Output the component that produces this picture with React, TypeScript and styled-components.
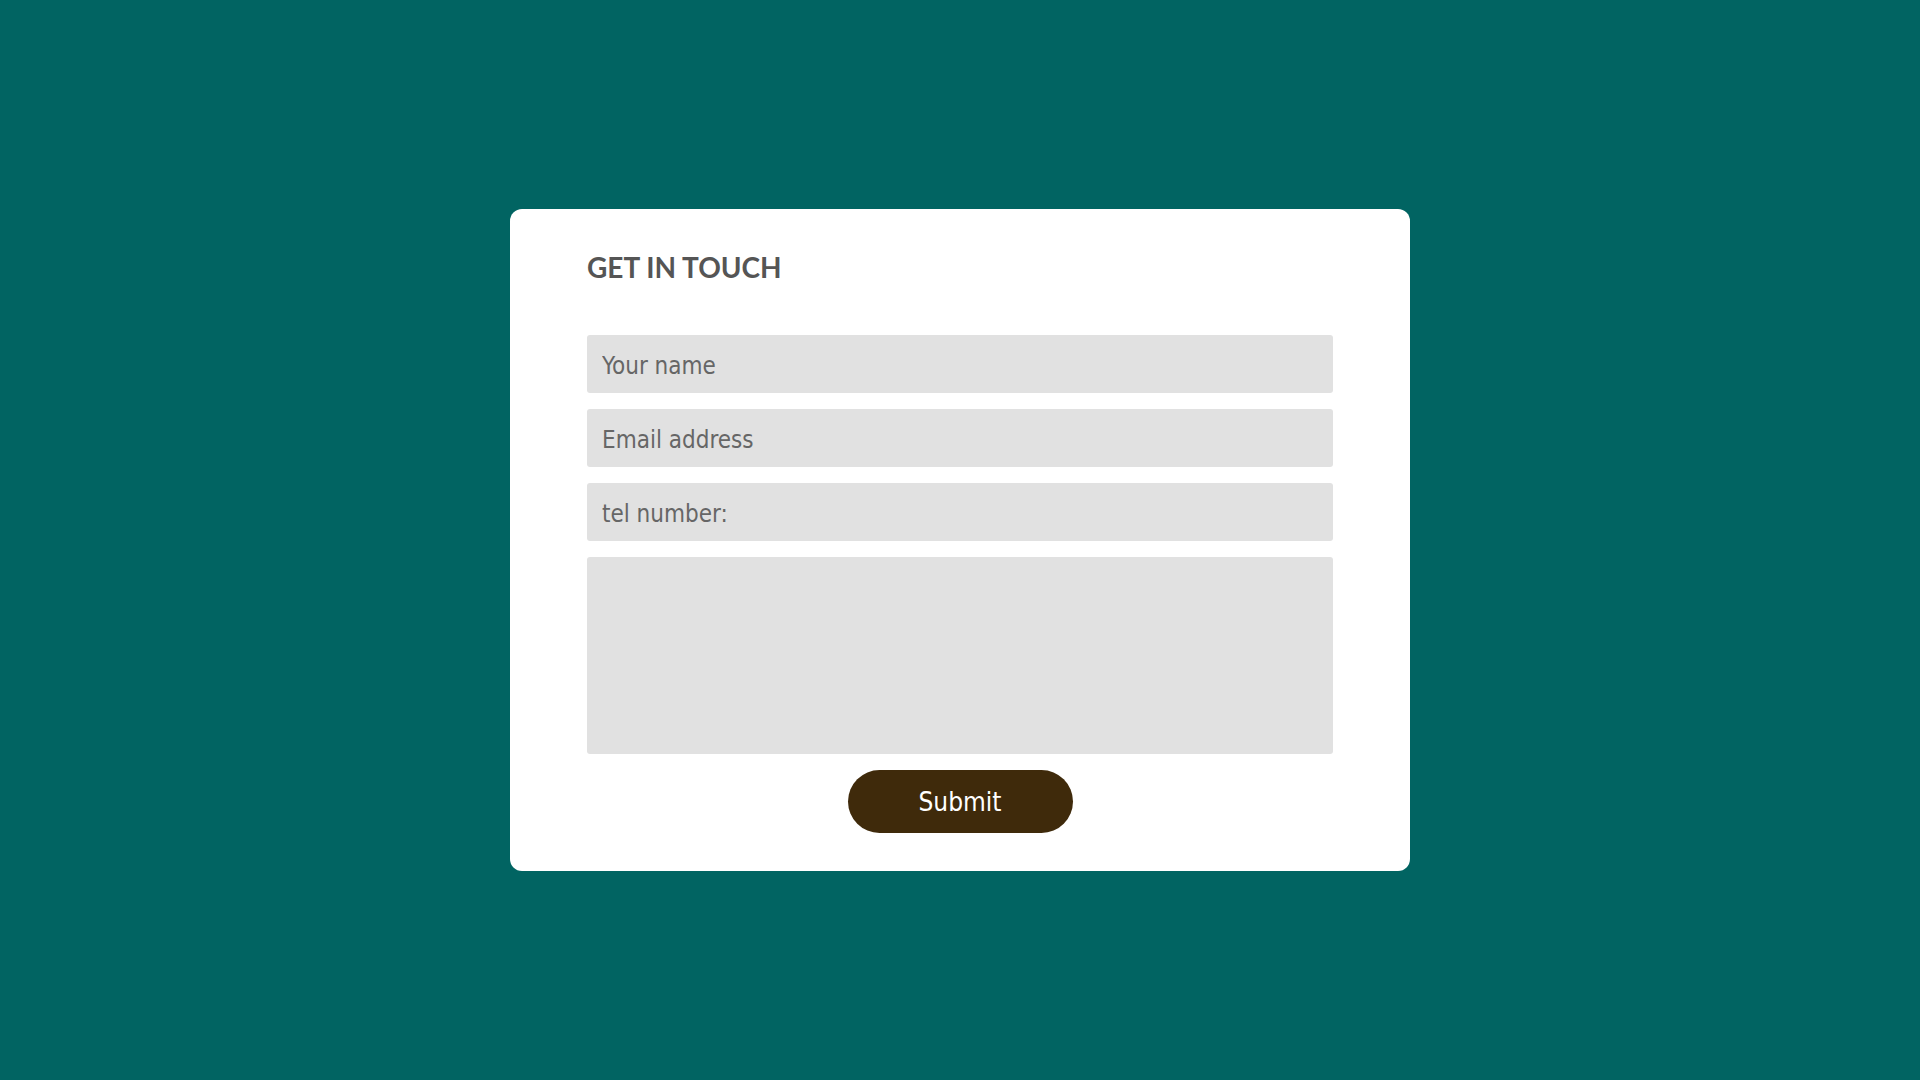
import React from 'react';
import styled, { createGlobalStyle } from 'styled-components';

const GlobalStyle = createGlobalStyle`
  html, body {
    margin: 0;
    padding: 0;
    background: #016462;
  }
  * {
    box-sizing: border-box;
  }
`

const Page = styled.div`
  min-height: 100vh;
  display: flex;
  align-items: center;
  justify-content: center;
`

const Card = styled.div`
  width: 900px;
  background: #ffffff;
  border-radius: 12px;
  padding: 41px 77px 38px;
`

const Title = styled.h2`
  margin: 0 0 50px;
  font-family: Lato, "Liberation Sans", sans-serif;
  font-weight: 700;
  font-size: 28px;
  line-height: 35px;
  color: #555555;
`

const Form = styled.form`
  display: flex;
  flex-direction: column;
  gap: 16px;
`

const Field = styled.input`
  display: block;
  width: 100%;
  height: 58px;
  border: none;
  outline: none;
  border-radius: 3px;
  background: #e1e1e1;
  padding: 3px 15px 0;
  font-family: "DejaVu Sans Condensed", "DejaVu Sans", sans-serif;
  font-size: 24px;
  color: #555555;

  &::placeholder {
    color: #666666;
    opacity: 1;
  }
`

const Message = styled.textarea`
  display: block;
  width: 100%;
  height: 197px;
  border: none;
  outline: none;
  border-radius: 3px;
  background: #e1e1e1;
  padding: 12px 15px;
  resize: none;
  font-family: "DejaVu Sans Condensed", "DejaVu Sans", sans-serif;
  font-size: 24px;
  color: #555555;
`

const SubmitButton = styled.button`
  align-self: center;
  width: 225px;
  height: 63px;
  border: none;
  border-radius: 32px;
  background: #3f2a0b;
  color: #ffffff;
  font-family: "DejaVu Sans Condensed", "DejaVu Sans", sans-serif;
  font-size: 26px;
  cursor: pointer;
`

const App = () => {
    return (
        <>
            <GlobalStyle />
            <Page>
                <Card>
                    <Title>GET IN TOUCH</Title>
                    <Form onSubmit={(e) => e.preventDefault()}>
                        <Field type="text" placeholder="Your name" />
                        <Field type="email" placeholder="Email address" />
                        <Field type="tel" placeholder="tel number:" />
                        <Message />
                        <SubmitButton type="submit">Submit</SubmitButton>
                    </Form>
                </Card>
            </Page>
        </>
    )
}

export default App
